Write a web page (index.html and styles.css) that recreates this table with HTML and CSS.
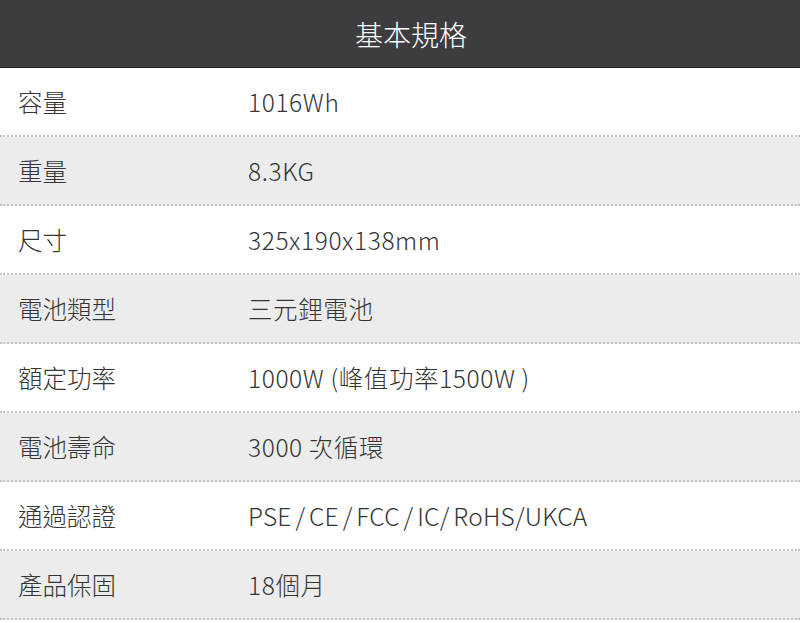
FILE: index.html
```html
<!DOCTYPE html>
<html lang="zh-Hant">
<head>
<meta charset="utf-8">
<title>基本規格</title>
<link rel="stylesheet" href="styles.css">
</head>
<body>
<div class="spec">
  <div class="spec-head">基本規格</div>
  <div class="row"><div class="label">容量</div><div class="value">1016Wh</div></div>
  <div class="row alt"><div class="label">重量</div><div class="value">8.3KG</div></div>
  <div class="row"><div class="label">尺寸</div><div class="value">325x190x138mm</div></div>
  <div class="row alt"><div class="label">電池類型</div><div class="value">三元鋰電池</div></div>
  <div class="row"><div class="label">額定功率</div><div class="value">1000W (峰值功率1500W )</div></div>
  <div class="row alt"><div class="label">電池壽命</div><div class="value">3000 次循環</div></div>
  <div class="row"><div class="label">通過認證</div><div class="value certs">PSE / CE / FCC / IC/ RoHS/UKCA</div></div>
  <div class="row alt"><div class="label">產品保固</div><div class="value">18個月</div></div>
</div>
</body>
</html>
```
FILE: styles.css
```css
html, body {
  margin: 0;
  padding: 0;
  background: #ffffff;
}
body {
  font-family: "Noto Sans CJK TC", "Noto Sans", sans-serif;
  font-weight: 300;
  color: #353535;
  width: 800px;
  height: 623px;
  overflow: hidden;
}
.spec-head {
  height: 67px;
  background: #3d3d3f;
  border-bottom: 1px solid #1e1e1e;
  color: #ffffff;
  font-size: 28px;
  display: flex;
  align-items: center;
  justify-content: center;
  padding-left: 22px;
}
.row {
  height: 67px;
  display: flex;
  align-items: center;
  border-bottom: 2px dotted #c4c4c4;
  font-size: 24.5px;
}
.row.alt {
  background: #ececec;
}
.label {
  width: 230px;
  padding-left: 18px;
  flex: none;
}
.value {
  flex: 1;
  letter-spacing: 0.6px;
}
.value.certs {
  letter-spacing: 0.2px;
  word-spacing: -1.8px;
}
```
